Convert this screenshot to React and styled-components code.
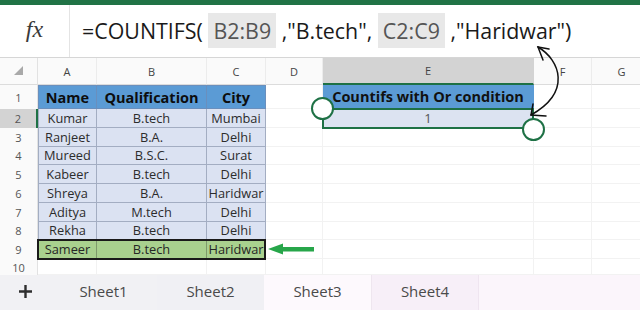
import React from "react";
import styled, { createGlobalStyle } from "styled-components";

const Global = createGlobalStyle`
  html, body { margin: 0; padding: 0; background: #fff; }
  body { width: 640px; height: 310px; overflow: hidden; }
  * { box-sizing: border-box; }
`;

const Frame = styled.div`
  position: relative;
  width: 640px;
  height: 310px;
  overflow: hidden;
  display: flex;
  flex-direction: column;
  font-family: "Open Sans", "Noto Sans", sans-serif;
  background: #fff;
`;

const Ribbon = styled.div`
  height: 5px;
  flex: none;
  background: #217346;
`;

const FormulaBar = styled.div`
  height: 53px;
  flex: none;
  display: flex;
  border-bottom: 1px solid #d6d6d6;
`;

const FxBox = styled.div`
  width: 70px;
  flex: none;
  display: flex;
  align-items: center;
  justify-content: center;
  border-right: 1px solid #e4e4e4;
  font-family: "Liberation Serif", serif;
  font-style: italic;
  font-size: 24px;
  color: #3a3a3a;
  padding-bottom: 3px;
`;

const Formula = styled.div`
  display: flex;
  align-items: center;
  padding-left: 12px;
  padding-bottom: 2px;
  font-size: 21.4px;
  color: #1a1a1a;
  white-space: pre;
`;

const Ref = styled.span`
  display: inline-flex;
  align-items: center;
  height: 35px;
  padding: 0 5px;
  background: #e8e8e8;
  color: #555;
`;

const Sheet = styled.div`
  flex: none;
  display: grid;
  grid-template-columns: 38px 59px 110px 59px 57px 211px 58px 60px;
  grid-template-rows: 27px 24px repeat(8, 18.75px) 16px;
`;

const place = (p) => `grid-row: ${p.$r}; grid-column: ${p.$c};`;

const ColHead = styled.div`
  ${place}
  display: flex;
  align-items: center;
  justify-content: center;
  font-size: 11px;
  color: #444;
  background: ${(p) => (p.$sel ? "#d3d3d3" : "#fafafa")};
  border-bottom: ${(p) => (p.$sel ? "2px solid #1e7145" : "1px solid #dcdcdc")};
  border-right: 1px solid ${(p) => (p.$sel ? "#d3d3d3" : "#ececec")};
`;

const Corner = styled.div`
  grid-row: 1;
  grid-column: 1;
  display: flex;
  align-items: flex-end;
  justify-content: flex-end;
  padding: 0 14px 9px 0;
  background: #fafafa;
  border-bottom: 1px solid #dcdcdc;
  border-right: 1px solid #e2e2e2;
`;

const RowHead = styled.div`
  ${place}
  display: flex;
  align-items: center;
  justify-content: center;
  font-size: 11px;
  color: #555;
  background: ${(p) => (p.$sel ? "#d3d3d3" : "#fafafa")};
  border-right: ${(p) => (p.$sel ? "2px solid #1e7145" : "1px solid #e2e2e2")};
`;

const cellThemes = {
  head: { bg: "#5b9bd5", line: "#6a8fbd", color: "#0d0d0d", weight: 700, size: "14.5px" },
  data: { bg: "#dbe2f2", line: "#a3adc2", color: "#2c2c2c", weight: 400, size: "12.8px" },
  pick: { bg: "#a9d18e", line: "#7e9a6b", color: "#262626", weight: 400, size: "12.8px" },
  blank: { bg: "#fff", line: "#f2f2f2", color: "#333", weight: 400, size: "12.8px" },
  result: { bg: "#dce3f1", line: "#dce3f1", color: "#555", weight: 400, size: "13px" },
};

const Cell = styled.div`
  ${place}
  position: relative;
  display: flex;
  align-items: center;
  justify-content: center;
  white-space: nowrap;
  background: ${(p) => cellThemes[p.$kind].bg};
  color: ${(p) => cellThemes[p.$kind].color};
  font-weight: ${(p) => cellThemes[p.$kind].weight};
  font-size: ${(p) => cellThemes[p.$kind].size};
  border-right: 1px solid ${(p) => cellThemes[p.$kind].line};
  border-bottom: 1px solid ${(p) => cellThemes[p.$kind].line};
  border-left: ${(p) => (p.$first ? `1px solid ${cellThemes[p.$kind].line}` : "none")};
  border-top: ${(p) => (p.$top ? `1px solid ${cellThemes[p.$kind].line}` : "none")};
`;

const TitleCell = styled(Cell)`
  font-size: 14.5px;
  font-weight: 700;
  color: #111;
  border-color: #5b9bd5;
`;

const ArrowCell = styled(Cell)`
  justify-content: flex-start;
  padding-left: 2px;
`;

const RowOutline = styled.div`
  grid-column: 2 / 5;
  grid-row: 10;
  margin: -1px 0 -1px -1px;
  border: 2px solid #1a1a1a;
  pointer-events: none;
  z-index: 2;
`;

const Selection = styled.div`
  position: relative;
  grid-column: 6;
  grid-row: 3;
  margin: -1px 0 -1px -1px;
  border: 2px solid #1e7145;
  pointer-events: none;
  z-index: 3;
`;

const Handle = styled.div`
  position: absolute;
  width: 23px;
  height: 23px;
  border-radius: 50%;
  background: #fff;
  border: 2.5px solid #1e7145;
  ${(p) => (p.$end ? "right: -13px; bottom: -14px;" : "left: -13px; top: -13px;")}
`;

const TabBar = styled.div`
  flex: 1;
  display: flex;
  background: #f1f1f4;
`;

const Plus = styled.div`
  width: 50px;
  flex: none;
  display: flex;
  align-items: center;
  justify-content: center;
  padding-bottom: 3px;
`;

const Tab = styled.div`
  width: 107px;
  flex: none;
  display: flex;
  align-items: center;
  justify-content: center;
  padding-bottom: 3px;
  font-size: 15px;
  color: #4a4a4a;
  background: ${(p) => p.$bg};
  border-left: ${(p) => (p.$divider ? "1px solid #eee6ef" : "none")};
`;

const TabFill = styled.div`
  flex: 1;
  background: #fbf5fb;
  border-left: 1px solid #efe5f0;
`;

const Overlay = styled.svg`
  position: absolute;
  left: 0;
  top: 0;
  pointer-events: none;
  z-index: 10;
`;

const rows = [
  ["Kumar", "B.tech", "Mumbai"],
  ["Ranjeet", "B.A.", "Delhi"],
  ["Mureed", "B.S.C.", "Surat"],
  ["Kabeer", "B.tech", "Delhi"],
  ["Shreya", "B.A.", "Haridwar"],
  ["Aditya", "M.tech", "Delhi"],
  ["Rekha", "B.tech", "Delhi"],
  ["Sameer", "B.tech", "Haridwar"],
];

const cols = ["A", "B", "C", "D", "E", "F", "G"];

function GreenArrow() {
  return (
    <svg width="46" height="14" viewBox="0 0 46 14">
      <polygon points="0,7 15,1.5 15,5 46,5 46,9.5 15,9.5 15,12.5" fill="#27a64a" />
    </svg>
  );
}

function PlusIcon() {
  return (
    <svg width="15" height="15" viewBox="0 0 15 15">
      <path d="M7.5 1v13M1 7.5h13" stroke="#2e2e2e" strokeWidth="2.4" />
    </svg>
  );
}

export default function App() {
  return (
    <Frame>
      <Global />
      <Ribbon />
      <FormulaBar>
        <FxBox>fx</FxBox>
        <Formula>
          {"=COUNTIFS( "}
          <Ref>B2:B9</Ref>
          {' ,"B.tech", '}
          <Ref>C2:C9</Ref>
          {' ,"Haridwar")'}
        </Formula>
      </FormulaBar>
      <Sheet>
        <Corner>
          <svg width="9" height="9" viewBox="0 0 9 9">
            <polygon points="9,0 9,9 0,9" fill="#a9a9a9" />
          </svg>
        </Corner>
        {cols.map((c, ci) => (
          <ColHead key={c} $r={1} $c={ci + 2} $sel={c === "E"}>
            {c}
          </ColHead>
        ))}
        <RowHead $r={2} $c={1}>1</RowHead>
        <Cell $r={2} $c={2} $kind="head" $first $top>Name</Cell>
        <Cell $r={2} $c={3} $kind="head" $top>Qualification</Cell>
        <Cell $r={2} $c={4} $kind="head" $top>City</Cell>
        <Cell $r={2} $c={5} $kind="blank" />
        <TitleCell $r={2} $c={6} $kind="head">Countifs with Or condition</TitleCell>
        <Cell $r={2} $c={7} $kind="blank" />
        <Cell $r={2} $c={8} $kind="blank" />
        {rows.map((r, i) => {
          const n = i + 2;
          const gr = n + 1;
          const kind = n === 9 ? "pick" : "data";
          return (
            <React.Fragment key={n}>
              <RowHead $r={gr} $c={1} $sel={n === 2}>{n}</RowHead>
              <Cell $r={gr} $c={2} $kind={kind} $first>{r[0]}</Cell>
              <Cell $r={gr} $c={3} $kind={kind}>{r[1]}</Cell>
              <Cell $r={gr} $c={4} $kind={kind}>{r[2]}</Cell>
              {n === 9 ? (
                <ArrowCell $r={gr} $c={5} $kind="blank">
                  <GreenArrow />
                </ArrowCell>
              ) : (
                <Cell $r={gr} $c={5} $kind="blank" />
              )}
              <Cell $r={gr} $c={6} $kind={n === 2 ? "result" : "blank"}>{n === 2 ? "1" : null}</Cell>
              <Cell $r={gr} $c={7} $kind="blank" />
              <Cell $r={gr} $c={8} $kind="blank" />
            </React.Fragment>
          );
        })}
        <RowHead $r={11} $c={1}>10</RowHead>
        {cols.map((c, ci) => (
          <Cell key={c} $r={11} $c={ci + 2} $kind="blank" />
        ))}
        <RowOutline />
        <Selection>
          <Handle />
          <Handle $end />
        </Selection>
      </Sheet>
      <TabBar>
        <Plus>
          <PlusIcon />
        </Plus>
        <Tab $bg="#f1f1f4">Sheet1</Tab>
        <Tab $bg="#f0f0f4">Sheet2</Tab>
        <Tab $bg="#fdf9fd">Sheet3</Tab>
        <Tab $bg="#f7eff8" $divider>Sheet4</Tab>
        <TabFill />
      </TabBar>
      <Overlay width="640" height="310" viewBox="0 0 640 310">
        <g fill="none" stroke="#111" strokeWidth="1.5" strokeLinecap="round">
          <path d="M538 47 C560 60, 572 92, 531 115" />
          <path d="M543 60 L538 47 L549 49" />
          <path d="M533 104 L531 115 L546 116" />
        </g>
      </Overlay>
    </Frame>
  );
}
